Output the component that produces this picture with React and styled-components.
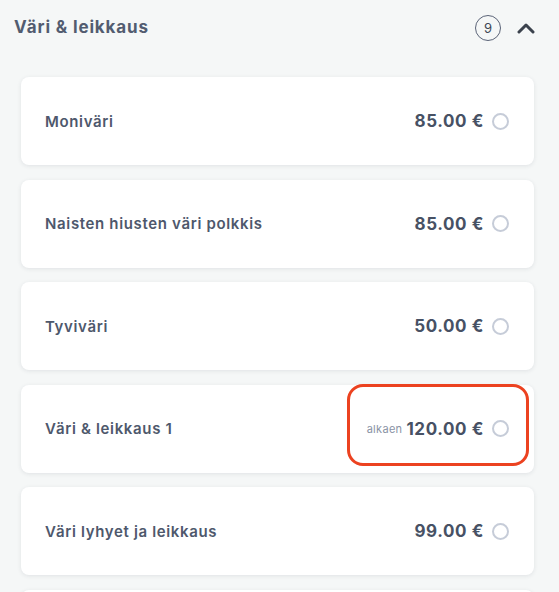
import React from "react";
import styled, { createGlobalStyle } from "styled-components";

const services = [
  { name: "Moniväri", price: "85.00 €" },
  { name: "Naisten hiusten väri polkkis", price: "85.00 €" },
  { name: "Tyviväri", price: "50.00 €" },
  { name: "Väri & leikkaus 1", price: "120.00 €", from: true, highlight: true },
  { name: "Väri lyhyet ja leikkaus", price: "99.00 €" },
  { peek: true },
];

const App = () => {
  return (
    <>
      <GlobalStyle />
      <Section>
        <Header>
          <Title>Väri &amp; leikkaus</Title>
          <Controls>
            <Count>9</Count>
            <ChevronUp />
          </Controls>
        </Header>
        <List>
          {services.map((s, i) =>
            s.peek ? (
              <Card key={i} />
            ) : (
              <Card key={i}>
                <Name>{s.name}</Name>
                <PriceWrap>
                  {s.from && <From>alkaen</From>}
                  <Price>{s.price}</Price>
                  <Radio />
                </PriceWrap>
                {s.highlight && <Highlight />}
              </Card>
            )
          )}
        </List>
      </Section>
    </>
  );
};

const GlobalStyle = createGlobalStyle`
  html, body {
    margin: 0;
    padding: 0;
    background: #f5f7f7;
    font-family: Inter, "Noto Sans", sans-serif;
    overflow: hidden;
  }
`;

const Section = styled.section`
  width: 559px;
  height: 592px;
  overflow: hidden;
`;

const Header = styled.div`
  display: flex;
  align-items: center;
  justify-content: space-between;
  height: 53px;
  padding: 3px 24px 0 14px;
  box-sizing: border-box;
`;

const Title = styled.h2`
  margin: 0;
  font-size: 17px;
  font-weight: 700;
  color: #525c70;
  letter-spacing: 0.85px;
  transform: translateY(-1px);
`;

const Controls = styled.div`
  display: flex;
  align-items: center;
  gap: 16px;
`;

const Count = styled.span`
  width: 24px;
  height: 24px;
  border: 1px solid #5b6478;
  border-radius: 50%;
  display: flex;
  align-items: center;
  justify-content: center;
  font-size: 13px;
  color: #3f4756;
`;

const List = styled.div`
  display: flex;
  flex-direction: column;
  gap: 14.5px;
  padding: 24px 25px 0 21px;
`;

const Card = styled.div`
  position: relative;
  height: 88px;
  flex-shrink: 0;
  background: #ffffff;
  border-radius: 8px;
  box-shadow: 0 1px 4px rgba(40, 50, 70, 0.1);
  display: flex;
  align-items: center;
  justify-content: space-between;
  padding: 0 25px 0 24px;
`;

const Name = styled.span`
  font-size: 15px;
  font-weight: 600;
  color: #4e586c;
  letter-spacing: 0.65px;
`;

const PriceWrap = styled.div`
  display: flex;
  align-items: center;
`;

const From = styled.span`
  font-size: 11px;
  color: #8a93a5;
  margin-right: 4px;
  margin-top: 1px;
  letter-spacing: 0.3px;
`;

const Price = styled.span`
  font-size: 17px;
  font-weight: 700;
  color: #475164;
  margin-right: 8px;
  letter-spacing: 0.6px;
`;

const Radio = styled.span`
  width: 13px;
  height: 13px;
  border: 2px solid #c6ccd8;
  border-radius: 50%;
`;

const Highlight = styled.div`
  position: absolute;
  left: 326px;
  top: -1px;
  width: 176px;
  height: 76px;
  border: 3px solid #ec4220;
  border-radius: 16px;
  pointer-events: none;
`;

const ChevronUp = () => (
  <svg width="18" height="11" viewBox="0 0 18 11" fill="none">
    <path
      d="M2 9l7-7 7 7"
      stroke="#3b424d"
      strokeWidth="3"
      strokeLinecap="round"
      strokeLinejoin="round"
    />
  </svg>
);

export default App;
